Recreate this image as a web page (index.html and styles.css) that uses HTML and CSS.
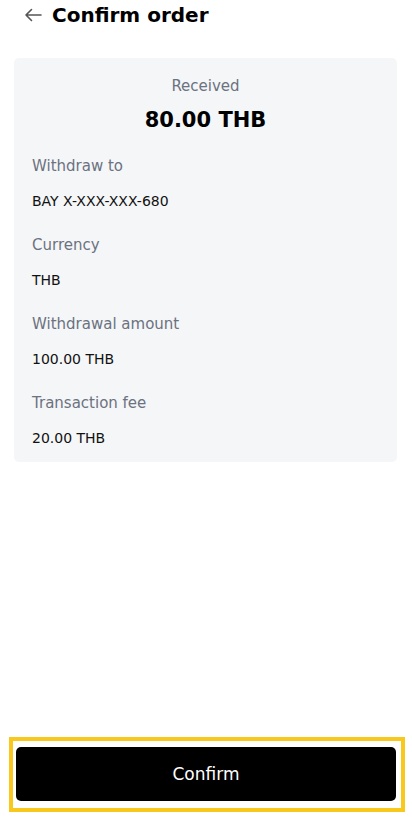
FILE: index.html
```html
<!DOCTYPE html>
<html>
<head>
<meta charset="utf-8">
<link rel="stylesheet" href="styles.css">
</head>
<body>
<div class="page">
  <header class="header">
    <svg class="back" width="18" height="14" viewBox="0 0 18 14"><path d="M17 7H2M7.5 1.5L2 7l5.5 5.5" fill="none" stroke="#555" stroke-width="1.6" stroke-linecap="round" stroke-linejoin="round"/></svg>
    <h1 class="title">Confirm order</h1>
  </header>
  <section class="card">
    <div class="received">
      <div class="received-label">Received</div>
      <div class="received-amount">80.00 THB</div>
    </div>
    <div class="row"><div class="label">Withdraw to</div><div class="value">BAY X-XXX-XXX-680</div></div>
    <div class="row"><div class="label">Currency</div><div class="value">THB</div></div>
    <div class="row"><div class="label">Withdrawal amount</div><div class="value">100.00 THB</div></div>
    <div class="row"><div class="label">Transaction fee</div><div class="value">20.00 THB</div></div>
  </section>
  <div class="spacer"></div>
  <div class="footer">
    <div class="highlight">
      <button class="confirm">Confirm</button>
    </div>
  </div>
</div>
</body>
</html>
```
FILE: styles.css
```css
* { box-sizing: border-box; }
html, body { margin: 0; padding: 0; background: #fff; }
body { font-family: "DejaVu Sans", "Noto Sans", sans-serif; color: #000; }
.page { height: 817px; display: flex; flex-direction: column; }
.header { display: flex; align-items: center; height: 30px; padding-left: 24px; gap: 10px; }
.back { display: block; }
.title { margin: 0; font-size: 20px; font-weight: 700; line-height: 30px; }
.card { margin: 28px 15px 0 14px; background: #f5f6f8; border-radius: 5px; padding: 17px 18px 13px 18px; }
.received { text-align: center; }
.received-label { font-size: 15px; color: #6b7280; line-height: 22px; }
.received-amount { font-size: 21px; font-weight: 700; line-height: 30px; margin-top: 8px; }
.row { margin-top: 22px; }
.received + .row { margin-top: 20px; }
.label { font-size: 15px; color: #6b7280; line-height: 22px; }
.value { font-size: 14px; line-height: 22px; margin-top: 13px; color: #111; }
.spacer { flex: 1; }
.footer { padding: 0 7px 5px 9px; }
.highlight { border: 4px solid #f8c81c; padding: 6px 5px 7px 3px; }
.confirm { display: block; width: 100%; height: 54px; background: #000; color: #fff; border: none; border-radius: 5px; font-family: inherit; font-size: 17px; font-weight: 400; }
```
